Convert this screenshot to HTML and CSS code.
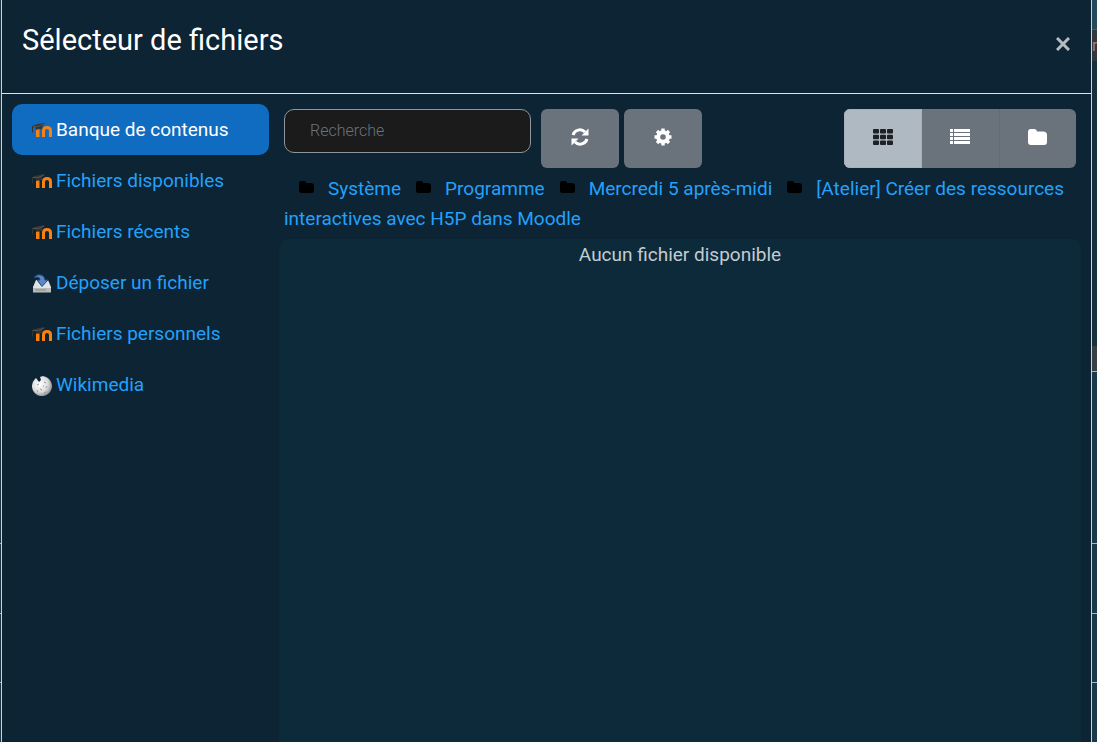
FILE: index.html
```
<!DOCTYPE html>
<html lang="fr">
<head>
<meta charset="utf-8">
<title>Sélecteur de fichiers</title>
<link rel="stylesheet" href="styles.css">
</head>
<body>
<svg class="sprite" aria-hidden="true">
  <symbol id="folder" viewBox="0 0 20 16"><path d="M0 3Q0 0 3 0H7Q9 0 9.500 2.500H16Q20 2.500 20 6V13Q20 16 17 16H3Q0 16 0 13Z"/></symbol>
  <symbol id="moodle" viewBox="0 0 20 20">
    <path d="M4 16V8.500H7.500V16ZM10 16V9.500Q10 5 15 5Q20 5 20 9.500V16H17V10Q17 8 15 8Q13 8 13 10V16Z" fill="#f98012"/>
    <path d="M0 5L6 3L13 2L10.500 5L10 8.500Q7 7 4 9L3.500 6L1 6.500V12L0 11Z" fill="#333"/>
    <path d="M1 5.500Q6 6.500 12 3" fill="none" stroke="#555" stroke-width="1"/>
  </symbol>
</svg>
<div class="page">
  <div class="backdrop backdrop-left"><i class="row row-top"></i><i class="row row-a"></i><i class="row row-b"></i></div>
  <main class="dialog">
    <header class="dialog-header">
      <h1 class="title">Sélecteur de fichiers</h1>
      <button class="close" aria-label="Fermer"><svg width="14" height="14" viewBox="0 0 14 14"><path d="M1 1L13 13M13 1L1 13" fill="none" stroke="currentColor" stroke-width="3"/></svg></button>
    </header>
    <div class="dialog-body">
      <nav class="sources">
        <a class="source active" href="#"><svg class="source-icon"><use href="#moodle"/></svg>Banque de contenus</a>
        <a class="source" href="#"><svg class="source-icon"><use href="#moodle"/></svg>Fichiers disponibles</a>
        <a class="source" href="#"><svg class="source-icon"><use href="#moodle"/></svg>Fichiers récents</a>
        <a class="source" href="#"><svg class="source-icon" viewBox="0 0 20 20"><path d="M4 6H16L19 13V18H1V13Z" fill="#e2e4e3"/><path d="M1 14H19V18.500H1Z" fill="#b9bcba"/><path d="M3 16H14" stroke="#888" stroke-width="1"/><path d="M2 4Q4 0 9 1Q13 2 13 6H16L10 12.500L5 6H8Q8 3 5 3Z" fill="#5c88c4" stroke="#23497f" stroke-width="1"/></svg>Déposer un fichier</a>
        <a class="source" href="#"><svg class="source-icon"><use href="#moodle"/></svg>Fichiers personnels</a>
        <a class="source" href="#"><svg class="source-icon" viewBox="0 0 20 20"><defs><radialGradient id="globe" cx=".4" cy=".4" r=".65"><stop offset="0" stop-color="#fff"/><stop offset=".6" stop-color="#ddd"/><stop offset="1" stop-color="#888"/></radialGradient></defs><path d="M4 2L7 6L9 4L8 1L11 0L14 1A10 10 0 1 1 3 3Z" fill="url(#globe)"/><path d="M5 9l2-1M12 6l2 1M8 13l2 1M14 12l1-2M5 14l1 2M11 10l1 0M12 17l2-1" stroke="#999" fill="none"/></svg>Wikimedia</a>
      </nav>
      <section class="browser">
        <div class="toolbar">
          <input class="search" type="text" placeholder="Recherche" aria-label="Recherche">
          <button class="tool" aria-label="Rafraîchir"><svg width="18" height="18" viewBox="0 0 18 18"><path d="M2 7A7.200 7.200 0 0 1 14 4M16 11A7.200 7.200 0 0 1 4 14" fill="none" stroke="currentColor" stroke-width="3"/><path d="M17.500 .5V7.500H10.500ZM.5 17.500V10.500H7.500Z" fill="currentColor"/></svg></button>
          <button class="tool" aria-label="Gérer"><svg width="18" height="18" viewBox="0 0 18 18"><circle cx="9" cy="9" r="4.800" fill="none" stroke="currentColor" stroke-width="4"/><path d="M9 .5V4M9 14V17.500M.5 9H4M14 9H17.500M3 3L5.500 5.500M12.500 12.500L15 15M15 3L12.500 5.500M5.500 12.500L3 15" stroke="currentColor" stroke-width="3.400"/></svg></button>
          <div class="views">
            <button class="view selected" aria-label="Icônes"><svg width="20" height="16" viewBox="0 0 20 16" fill="currentColor"><rect width="6" height="4.500" rx="1"/><rect x="7" width="6" height="4.500" rx="1"/><rect x="14" width="6" height="4.500" rx="1"/><rect y="5.700" width="6" height="4.500" rx="1"/><rect x="7" y="5.700" width="6" height="4.500" rx="1"/><rect x="14" y="5.700" width="6" height="4.500" rx="1"/><rect y="11.400" width="6" height="4.500" rx="1"/><rect x="7" y="11.400" width="6" height="4.500" rx="1"/><rect x="14" y="11.400" width="6" height="4.500" rx="1"/></svg></button>
            <button class="view" aria-label="Liste"><svg width="20" height="16" viewBox="0 0 20 16" fill="currentColor"><path d="M0 0H3V3H0ZM4 0H20V3H4ZM0 4H3V7H0ZM4 4H20V7H4ZM0 8H3V11H0ZM4 8H20V11H4ZM0 12H3V15H0ZM4 12H20V15H4Z"/></svg></button>
            <button class="view" aria-label="Arborescence"><svg width="19" height="16" viewBox="0 0 20 16" preserveAspectRatio="none" fill="currentColor"><use href="#folder"/></svg></button>
          </div>
        </div>
        <nav class="path"><svg class="crumb-icon"><use href="#folder"/></svg><a href="#">Système</a><svg class="crumb-icon"><use href="#folder"/></svg><a href="#">Programme</a><svg class="crumb-icon"><use href="#folder"/></svg><a href="#">Mercredi 5 après-midi</a><svg class="crumb-icon"><use href="#folder"/></svg><a href="#">[Atelier] Créer des ressources interactives avec H5P dans Moodle</a></nav>
        <div class="files">Aucun fichier disponible</div>
      </section>
    </div>
  </main>
  <div class="backdrop"><i class="row bar"></i><i class="band">rs</i><i class="row gap"></i><i class="row header-cell"></i><i class="row cell"></i><i class="row row-a"></i><i class="row row-b"></i></div>
</div>
</body>
</html>
```
FILE: styles.css
```
* { box-sizing: border-box; }
body { margin: 0; background: #0c2433; color: #c3ccd2; font: 19px/30px Roboto, sans-serif; }
a { color: #23a1fb; text-decoration: none; }
button { border: 0; margin: 0; padding: 0; font: inherit; cursor: pointer; }
.sprite { display: none; }
.page { display: grid; grid-template-columns: 1px minmax(0, 1fr) 5px; min-height: 100vh; overflow: hidden; }
.dialog { display: flex; flex-direction: column; border: solid #cbd3d7; border-width: 0 1px; background: #0c2433; }
.dialog-header { display: flex; justify-content: space-between; align-items: flex-start; height: 94px; padding: 20px 21px 0 20px; border-bottom: 1px solid #d7e7ed; }
.title { margin: 0; color: #fff; font-size: 29px; line-height: 40px; font-weight: 400; }
.close { display: flex; margin-top: 17px; background: none; color: #b6bdc2; }
.dialog-body { display: flex; flex: 1; padding: 10px 10px 0; }
.sources { width: 257px; flex: none; }
.source { display: flex; align-items: center; gap: 4px; height: 51px; padding: 0 20px; border-radius: 10px; }
.source.active { background: #106cc0; color: #fff; }
.source-icon { width: 20px; height: 20px; flex: none; margin-top: 2px; }
.source-icon use { width: 20px; height: 20px; }
.browser { display: flex; flex: 1; flex-direction: column; margin-left: 10px; min-width: 0; }
.toolbar { display: flex; align-items: flex-start; gap: 5px; padding: 5px 5px 0; }
.search { width: 247px; height: 44px; margin-right: 5px; padding: 0 25px 2px; border: 1px solid #8f959e; border-radius: 10px; background: #1b1b1b; color: #fff; font: 300 16px/24px Roboto, sans-serif; }
.search::placeholder { color: #6a737b; opacity: 1; }
.tool, .view { display: flex; align-items: center; justify-content: center; height: 59px; padding-bottom: 3px; background: #6a737b; color: #fff; }
.tool { width: 78px; border-radius: 6px; }
.views { display: flex; margin-left: auto; width: 232px; overflow: hidden; border-radius: 6px; }
.view { flex: 1; }
.view.selected { border: 1px solid #a6b1bb; background: #afb9c2; color: #1d2125; }
.view:last-child { border-left: 1px solid #626c76; }
.path { padding: 6px 5px 5px; }
.crumb-icon { width: 15px; height: 12px; margin: 0 14px 0 15px; fill: #000; vertical-align: 2px; }
.files { flex: 1; padding-top: 1px; border-radius: 10px 10px 0 0; background: #0c2a39; text-align: center; }
.backdrop { display: flex; flex-direction: column; overflow: hidden; background: #1a394a; }
.backdrop-left { background: #1c3340; }
.row { flex: none; border-bottom: 1px solid #a9b7be; }
.bar { height: 30px; border-color: #4b5a63; background: #24495a; }
.band { height: 31px; flex: none; overflow: hidden; background: #30383f; color: #a57c76; font: 16px/32px Roboto, sans-serif; }
.gap { height: 285px; border: 0; background: #18303e; }
.header-cell { height: 26px; background: #373f43; }
.cell { height: 172px; }
.row-top { height: 544px; }
.row-a { height: 70px; }
.row-b { height: 69px; }
```
